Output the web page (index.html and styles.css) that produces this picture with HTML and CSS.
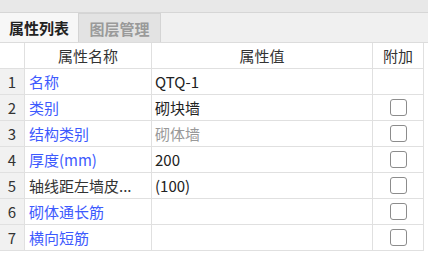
FILE: index.html
```html
<!DOCTYPE html>
<html lang="zh-CN">
  <head>
    <meta charset="utf-8">
    <title>属性列表</title>
    <link rel="stylesheet" href="styles.css">
  </head>
  <body>
    <div class="panel">
      <div class="topbar"></div>
      <div class="tabs">
        <div class="tab active">属性列表</div>
        <div class="tab">图层管理</div>
      </div>
      <div class="grid">
        <div class="row head">
          <div class="cell num"></div>
          <div class="cell center">属性名称</div>
          <div class="cell center">属性值</div>
          <div class="cell center">附加</div>
        </div>
        <div class="row">
          <div class="cell num">1</div>
          <div class="cell name">名称</div>
          <div class="cell value">QTQ-1</div>
          <div class="cell extra"></div>
        </div>
        <div class="row">
          <div class="cell num">2</div>
          <div class="cell name">类别</div>
          <div class="cell value">砌块墙</div>
          <div class="cell extra"><span class="check"></span></div>
        </div>
        <div class="row">
          <div class="cell num">3</div>
          <div class="cell name">结构类别</div>
          <div class="cell value muted">砌体墙</div>
          <div class="cell extra"><span class="check"></span></div>
        </div>
        <div class="row">
          <div class="cell num">4</div>
          <div class="cell name">厚度(mm)</div>
          <div class="cell value">200</div>
          <div class="cell extra"><span class="check"></span></div>
        </div>
        <div class="row">
          <div class="cell num">5</div>
          <div class="cell name plain">轴线距左墙皮...</div>
          <div class="cell value">(100)</div>
          <div class="cell extra"><span class="check"></span></div>
        </div>
        <div class="row">
          <div class="cell num">6</div>
          <div class="cell name">砌体通长筋</div>
          <div class="cell value"></div>
          <div class="cell extra"><span class="check"></span></div>
        </div>
        <div class="row">
          <div class="cell num">7</div>
          <div class="cell name">横向短筋</div>
          <div class="cell value"></div>
          <div class="cell extra"><span class="check"></span></div>
        </div>
      </div>
    </div>
  </body>
</html>
```

FILE: styles.css
```css
body { margin: 0; background: #fff; font-family: "Noto Sans CJK SC", "Noto Sans", sans-serif; font-size: 15px; color: #222; }
.panel { width: 428px; height: 256px; overflow: hidden; }
.topbar { height: 12px; background: #e8e8e8; border-bottom: 1px solid #d6d6d6; }
.tabs { display: flex; height: 29px; background: #f0f0f0; border-bottom: 1px solid #dcdcdc; }
.tab { display: flex; align-items: center; justify-content: center; width: 78px; font-weight: bold; color: #9a9a9a; box-sizing: border-box; }
.tab.active { width: 78px; color: #222; background: #f7f7f7; }
.tab + .tab { width: 83px; background: #e3e3e3; border-left: 1px solid #d4d4d4; border-right: 1px solid #d4d4d4; border-top: 1px solid #d4d4d4; }
.row { display: grid; grid-template-columns: 25px 127px 221px 51px; height: 26px; }
.row.head { height: 26px; }
.cell { display: flex; align-items: center; border-right: 1px solid #e0e0e0; border-bottom: 1px solid #e0e0e0; white-space: nowrap; overflow: hidden; }
.head .cell { color: #333; }
.center { justify-content: center; }
.num { justify-content: center; background: #f1f1f1; color: #333; }
.head .num { background: #fff; }
.name { padding-left: 4px; color: #3d5afe; }
.name.plain { color: #333; }
.value { padding-left: 3px; color: #222; }
.value.muted { color: #999; }
.extra { justify-content: center; }
.check { width: 17px; height: 17px; box-sizing: border-box; border: 1.5px solid #8c8c8c; border-radius: 3px; background: #fff; }
```
